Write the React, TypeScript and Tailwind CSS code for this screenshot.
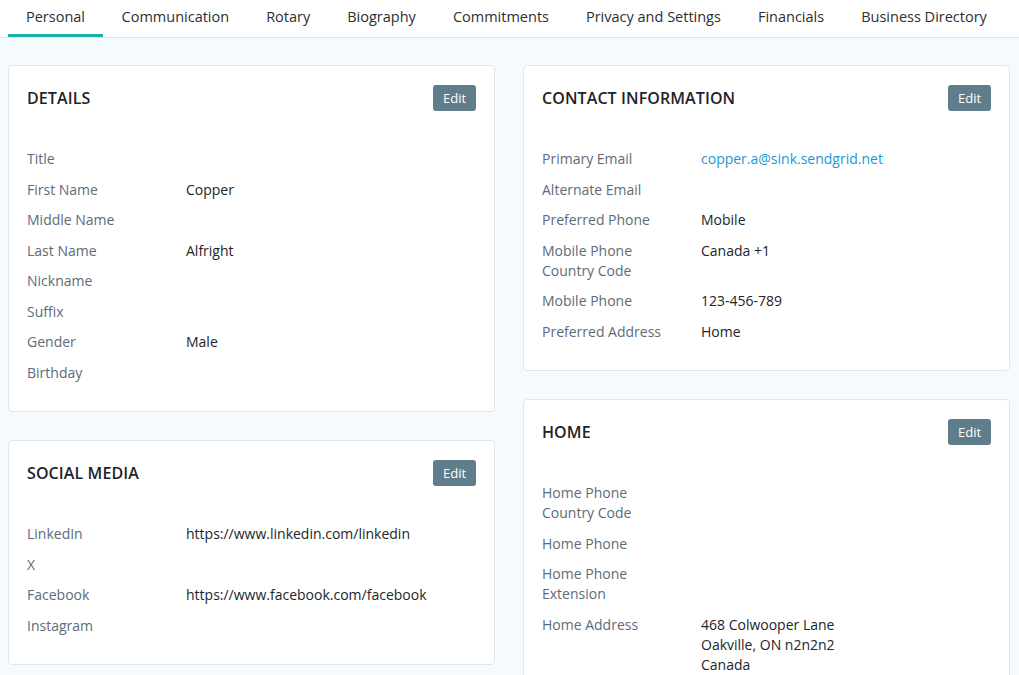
const tabs = [
  "Personal",
  "Communication",
  "Rotary",
  "Biography",
  "Commitments",
  "Privacy and Settings",
  "Financials",
  "Business Directory",
];

type Row = { label: string; value?: string[]; link?: boolean };

function Card({ title, rows }: { title: string; rows: Row[] }) {
  return (
    <section className="bg-white border border-[#dfe6ee] rounded-[4px] px-[18px] pt-[19px] pb-[18px]">
      <div className="flex items-center justify-between h-[26px]">
        <h2 className="text-[16px] font-semibold text-[#1f2328] tracking-[0.1px]">{title}</h2>
        <button className="h-[26px] w-[43px] rounded-[3px] bg-[#607d8b] text-white text-[13px] leading-none">
          Edit
        </button>
      </div>
      <dl className="mt-[38px] flex flex-col">
        {rows.map((r) => (
          <div key={r.label} className="flex text-[14px] leading-[20px] mb-[10.5px]">
            <dt className="w-[159px] shrink-0 pr-[30px] text-[#5d6b78]">{r.label}</dt>
            <dd className={r.link ? "text-[#1b98d5]" : "text-[#212529]"}>
              {r.value?.map((v) => (
                <div key={v}>{v}</div>
              ))}
            </dd>
          </div>
        ))}
      </dl>
    </section>
  );
}

export default function App() {
  return (
    <main className="min-h-screen bg-[#f7fafd] font-['Open_Sans',sans-serif]">
      <nav className="h-[38px] bg-white border-b border-[#dfe6ee] flex pl-[8px]">
        {tabs.map((t, i) => (
          <div
            key={t}
            className={
              i === 0
                ? "h-[37px] px-[18px] flex items-center text-[14.5px] text-[#2b2f33] border-b-[3px] border-[#17b3a5] pt-[3px]"
                : "h-[37px] px-[18.5px] flex items-center text-[14.5px] text-[#2b2f33] pb-[3px] pt-[3px]"
            }
          >
            <span className="-mt-[4px]">{t}</span>
          </div>
        ))}
      </nav>

      <div className="grid grid-cols-2 gap-[28px] pl-[8px] pr-[9px] pt-[27px]">
        <div className="flex flex-col gap-[28px]">
          <Card
            title="DETAILS"
            rows={[
              { label: "Title" },
              { label: "First Name", value: ["Copper"] },
              { label: "Middle Name" },
              { label: "Last Name", value: ["Alfright"] },
              { label: "Nickname" },
              { label: "Suffix" },
              { label: "Gender", value: ["Male"] },
              { label: "Birthday" },
            ]}
          />
          <Card
            title="SOCIAL MEDIA"
            rows={[
              { label: "LinkedIn", value: ["https://www.linkedin.com/linkedin"] },
              { label: "X" },
              { label: "Facebook", value: ["https://www.facebook.com/facebook"] },
              { label: "Instagram" },
            ]}
          />
        </div>
        <div className="flex flex-col gap-[28px]">
          <Card
            title="CONTACT INFORMATION"
            rows={[
              { label: "Primary Email", value: ["copper.a@sink.sendgrid.net"], link: true },
              { label: "Alternate Email" },
              { label: "Preferred Phone", value: ["Mobile"] },
              { label: "Mobile Phone Country Code", value: ["Canada +1"] },
              { label: "Mobile Phone", value: ["123-456-789"] },
              { label: "Preferred Address", value: ["Home"] },
            ]}
          />
          <Card
            title="HOME"
            rows={[
              { label: "Home Phone Country Code" },
              { label: "Home Phone" },
              { label: "Home Phone Extension" },
              {
                label: "Home Address",
                value: ["468 Colwooper Lane", "Oakville, ON n2n2n2", "Canada"],
              },
            ]}
          />
        </div>
      </div>
    </main>
  );
}
